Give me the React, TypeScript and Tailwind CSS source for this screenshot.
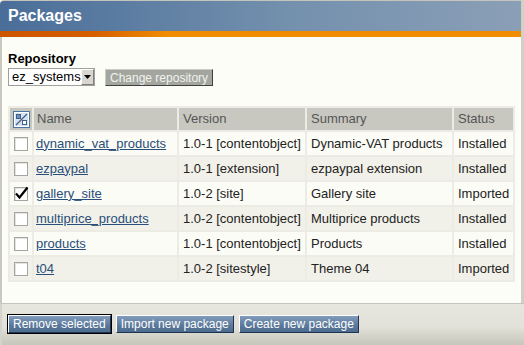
const rows = [
  { name: "dynamic_vat_products", version: "1.0-1 [contentobject]", summary: "Dynamic-VAT products", status: "Installed", checked: false },
  { name: "ezpaypal", version: "1.0-1 [extension]", summary: "ezpaypal extension", status: "Installed", checked: false },
  { name: "gallery_site", version: "1.0-2 [site]", summary: "Gallery site", status: "Imported", checked: true },
  { name: "multiprice_products", version: "1.0-2 [contentobject]", summary: "Multiprice products", status: "Installed", checked: false },
  { name: "products", version: "1.0-1 [contentobject]", summary: "Products", status: "Installed", checked: false },
  { name: "t04", version: "1.0-2 [sitestyle]", summary: "Theme 04", status: "Imported", checked: false },
];

function ToggleIcon() {
  return (
    <svg width="17" height="17" viewBox="0 0 17 17" className="block mx-auto">
      <rect x="0.5" y="0.5" width="16" height="16" fill="#d8e2ee" stroke="#4a74a4" />
      <rect x="1.5" y="1.5" width="14" height="14" fill="none" stroke="#ffffff" />
      <line x1="3" y1="14" x2="14" y2="3" stroke="#3d5f8c" strokeWidth="1.2" />
      <rect x="3.5" y="3.5" width="4" height="4" fill="#6f8fb5" stroke="#3d5f8c" />
      <rect x="9.5" y="9.5" width="4" height="4" fill="#ffffff" stroke="#3d5f8c" />
    </svg>
  );
}

function Checkbox({ checked }: { checked: boolean }) {
  return (
    <div className="relative w-[14px] h-[14px] mx-auto bg-white border border-[#a4a4a0] shadow-[inset_1px_1px_0_#e4e4e0]">
      {checked && (
        <svg width="16" height="14" viewBox="0 0 16 14" className="absolute -left-[1px] -top-[2px]">
          <path d="M2 7.5 L5.5 11.5 L13.5 1.5" fill="none" stroke="#000" strokeWidth="2.2" />
        </svg>
      )}
    </div>
  );
}

function BlueButton({ label, active }: { label: string; active?: boolean }) {
  return (
    <div className={active ? "border border-black" : "border border-transparent"}>
      <button className="block h-[18px] px-[4px] text-[12px] leading-none text-white bg-[linear-gradient(to_bottom,#819cbc,#5a7899_60%,#4d6b8e)] border border-t-white border-l-white border-r-[#1e3450] border-b-[#1e3450]">
        {label}
      </button>
    </div>
  );
}

export default function App() {
  return (
    <div className="w-[524px] h-[345px] flex flex-col overflow-hidden font-['Liberation_Sans',Arial,sans-serif] bg-white">
      <div className="flex-1 flex flex-col border-r-[3px] border-[#d0d0c8]">
        <div className="h-[31px] flex items-center px-2 rounded-tl-[4px] border-t border-[#c4c4bc] bg-[linear-gradient(to_right,#4a6e99,#7390ad_55%,#8b9fb7)]">
          <h1 className="text-[16px] font-bold text-white">Packages</h1>
        </div>
        <div className="h-[6px] bg-[linear-gradient(to_right,#cc5500_0%,#d45e00_18%,#f08c00_32%,#f08c00_100%)]" />
        <div className="flex-1 bg-[#fdfdf7] border-l-2 border-[#c8c8c0] pl-[6px] pt-[14px]">
          <div className="text-[13px] leading-[15px] font-bold text-black">Repository</div>
          <div className="flex items-start gap-[10px] mt-[2px]">
            <div className="w-[87px] h-[18px] flex items-stretch bg-white border border-[#a0a0a0]">
              <span className="flex-1 text-[13px] leading-[16px] pl-[3px] text-black">ez_systems</span>
              <span className="w-[16px] flex items-center justify-center bg-[#d8d6cf] border border-t-white border-l-white border-r-[#808080] border-b-[#808080]">
                <svg width="7" height="4" viewBox="0 0 7 4"><path d="M0 0 H7 L3.5 4 Z" fill="#000" /></svg>
              </span>
            </div>
            <button className="mt-[1px] h-[17px] px-[4px] text-[12px] leading-none text-[#f2f2ee] bg-[#a2a69f] border border-t-[#c8ccc4] border-l-[#c8ccc4] border-r-[#404040] border-b-[#404040]">
              Change repository
            </button>
          </div>
          <table className="mt-[20px] border-separate border-spacing-[2px] bg-[#ececE4] text-[13px] text-[#222]">
            <thead>
              <tr className="h-[22px] bg-[#c8c8c0] text-[#555] text-left">
                <th className="w-[22px] p-0 font-normal"><ToggleIcon /></th>
                <th className="w-[143px] pl-[3px] font-normal">Name</th>
                <th className="w-[126px] pl-[4px] font-normal">Version</th>
                <th className="w-[145px] pl-[4px] font-normal">Summary</th>
                <th className="w-[59px] pl-[4px] font-normal">Status</th>
              </tr>
            </thead>
            <tbody>
              {rows.map((r, i) => (
                <tr key={r.name} className={i % 2 === 0 ? "h-[23px] bg-[#fcfcf6]" : "h-[23px] bg-[#f1f1e9]"}>
                  <td className="p-0"><Checkbox checked={r.checked} /></td>
                  <td className="pl-[2px]">
                    <a href="#" className="text-[#2a4e7a] underline">{r.name}</a>
                  </td>
                  <td className="pl-[4px] whitespace-nowrap">{r.version}</td>
                  <td className="pl-[4px] whitespace-nowrap">{r.summary}</td>
                  <td className="pl-[4px]">{r.status}</td>
                </tr>
              ))}
            </tbody>
          </table>
        </div>
      </div>
      <div className="h-[42px] border-t border-[#c4c4bc] border-l-2 border-l-[#d4d4cc] bg-[linear-gradient(to_bottom,#e6e6de_0%,#e2e2da_55%,#c6c6ba_100%)] flex items-start gap-[3px] pl-[5px] pt-[10px]">
        <BlueButton label="Remove selected" active />
        <BlueButton label="Import new package" />
        <BlueButton label="Create new package" />
      </div>
    </div>
  );
}
